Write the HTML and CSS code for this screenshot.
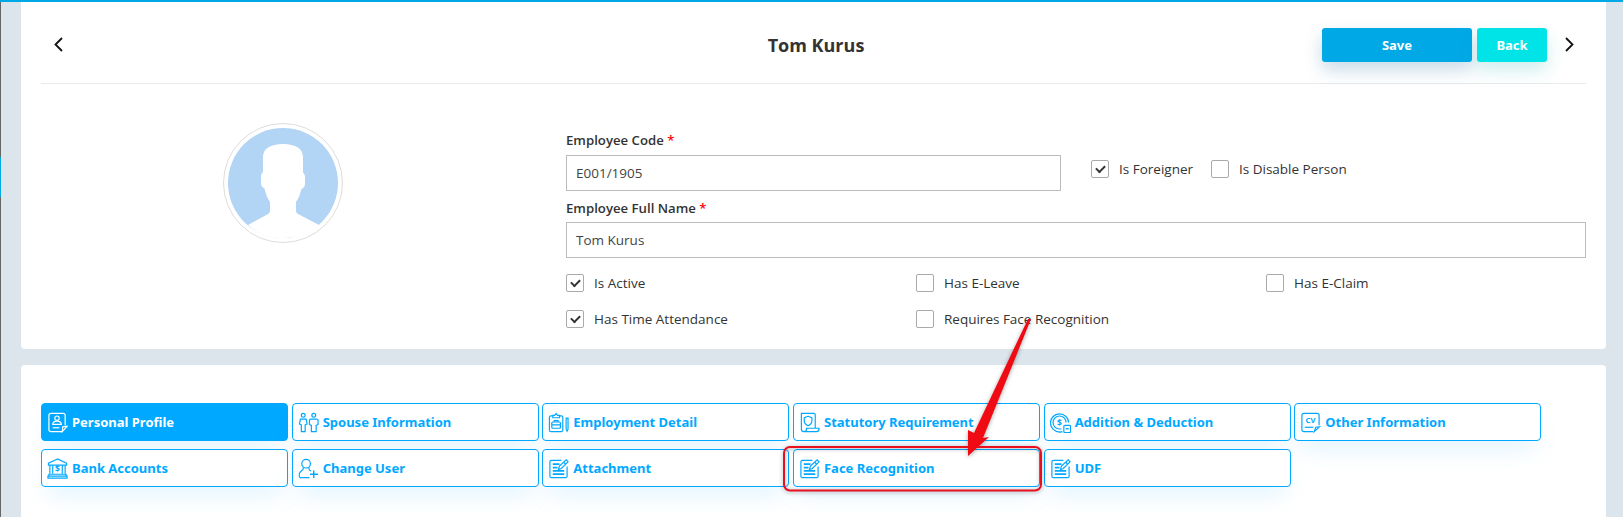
FILE: index.html
```html
<!DOCTYPE html>
<html lang="en">
<head>
    <meta charset="UTF-8">
    <meta name="viewport" content="width=device-width, initial-scale=1.0">
    <title>Tom Kurus</title>
    <link rel="stylesheet" href="styles.css">
</head>
<body>
    <!-- Shared note icon, used by three tabs -->
    <svg class="sprite" aria-hidden="true">
        <symbol id="icon-note" viewBox="0 0 22 22">
            <path d="M14 2.500H3.500a1.500 1.500 0 0 0-1.500 1.500v15a1.500 1.500 0 0 0 1.500 1.500h15a1.500 1.500 0 0 0 1.500-1.500V9"/>
            <path d="M5 6.500h7M5 10h5M5 13.500h12M5 17h12" stroke-width="1.800"/>
            <path d="M11 12l1-3.500 7-6.500 2 2-7 7z" fill="#fff"/>
            <path d="M16.500 4.500l2 2"/>
        </symbol>
    </svg>

    <div class="topbar"></div>
    <div class="layout">
        <div class="rail"><div class="rail-active"></div></div>
        <main class="content">
            <section class="card card-employee">
                <header class="card-header">
                    <svg class="chevron" viewBox="0 0 9 15"><path d="M8 1L1.500 7.500 8 14"/></svg>
                    <h1>Tom Kurus</h1>
                    <div class="actions">
                        <button class="btn btn-save">Save</button>
                        <button class="btn btn-back">Back</button>
                        <svg class="chevron chevron-right" viewBox="0 0 9 15"><path d="M1 1l6.500 6.500L1 14"/></svg>
                    </div>
                </header>
                <div class="employee">
                    <div class="avatar-col">
                        <div class="avatar">
                            <svg viewBox="0 0 110 110">
                                <circle cx="55" cy="55" r="55" fill="#b2d4f5"/>
                                <path d="M20 97L40 86c1.500-.8 2-2 2-3.500V74c-2-3-3.500-6-4.500-9.500l-1-4c-2-1-3.500-2.500-3.500-5v-7c0-2 .8-3.500 2-4.500V29c0-8 7-13 20-13s20 5 20 13v15.500c1.200 1 2 2.500 2 4.500v7c0 2.500-1.500 4-3.500 5l-1 3.500c-1 3.500-2.500 6.500-4.500 9.500v8.500c0 1.500.5 2.700 2 3.500L91 97C81 106 69 110 55 110S30 106 20 97z" fill="#fff"/>
                            </svg>
                        </div>
                    </div>
                    <div class="employee-form">
                        <label class="field-label">Employee Code <span class="required">*</span></label>
                        <div class="code-row">
                            <input class="text-input code-input" type="text" value="E001/1905">
                            <div class="code-checks">
                                <div class="check is-checked"><span class="box"></span>Is Foreigner</div>
                                <div class="check"><span class="box"></span>Is Disable Person</div>
                            </div>
                        </div>
                        <label class="field-label field-label-next">Employee Full Name <span class="required">*</span></label>
                        <input class="text-input" type="text" value="Tom Kurus">
                        <div class="check-grid">
                            <div class="check is-checked"><span class="box"></span>Is Active</div>
                            <div class="check"><span class="box"></span>Has E-Leave</div>
                            <div class="check"><span class="box"></span>Has E-Claim</div>
                            <div class="check is-checked"><span class="box"></span>Has Time Attendance</div>
                            <div class="check"><span class="box"></span>Requires Face Recognition</div>
                        </div>
                    </div>
                </div>
            </section>

            <section class="card card-tabs">
                <div class="tabs">
                    <a class="tab is-active">
                        <svg viewBox="0 0 22 22"><path d="M16 20.500H4a2 2 0 0 1-2-2V3.500a2 2 0 0 1 2-2h13a2 2 0 0 1 2 2V14"/><circle cx="10.500" cy="6.500" r="2.300"/><path d="M6 13c0-2.500 2-3.500 4.500-3.500S15 10.500 15 13z"/><path d="M6 16.500h7"/><path d="M16 20.500l5-5.500-4.500.5z"/></svg>
                        Personal Profile
                    </a>
                    <a class="tab">
                        <svg viewBox="0 0 22 22"><circle cx="5.500" cy="3.500" r="2"/><circle cx="16.500" cy="3.500" r="2"/><path d="M2.500 7.500h6l1 5-2 1V20.500h-4V13.500l-2-1z"/><path d="M13.500 7.500h6c1 0 1.500 .5 1.500 1.500v4l-2 1v6.500h-5V14l-2-1V9c0-1 .5-1.500 1.500-1.500z"/></svg>
                        Spouse Information
                    </a>
                    <a class="tab">
                        <svg viewBox="0 0 22 22"><path d="M5 4H3a1.500 1.500 0 0 0-1.500 1.500V19A1.500 1.500 0 0 0 3 20.500h11a1.500 1.500 0 0 0 1.500-1.500V5.500A1.500 1.500 0 0 0 14 4h-2"/><path d="M5 6V3.500h2l1.500-2 1.500 2h2V6z"/><rect x="4" y="10.500" width="9" height="6.500" rx="1"/><path d="M6.500 10.500V9h4v1.500M4 13.500h9"/><path d="M19 6.500h2V18l-1 2-1-2z"/></svg>
                        Employment Detail
                    </a>
                    <a class="tab">
                        <svg viewBox="0 0 22 22"><path d="M17 17V3a1.500 1.500 0 0 0-1.500-1.500H2.500V18a2.500 2.500 0 0 0 2.500 2.500h13.500c1.500 0 2.500-1.500 2.500-3.500H8c0 2-1 3.500-3 3.500"/><path d="M9.500 4.500l4 1.500v3.500c0 2.500-2 4-4 5-2-1-4-2.500-4-5V6z"/></svg>
                        Statutory Requirement
                    </a>
                    <a class="tab">
                        <svg viewBox="0 0 22 22"><path d="M13 20.500c-1 .3-2 .5-3 .5A9.500 9.500 0 1 1 19.500 11"/><path d="M12 17.500c-.7 .2-1.300 .3-2 .3a6.800 6.800 0 1 1 6.800-6.800"/><text class="coin" x="10" y="14.500">$</text><rect x="14.500" y="14" width="7" height="7.500" rx="1" fill="#fff"/><path d="M16.500 17.500h3" stroke-width="1.500"/></svg>
                        Addition &amp; Deduction
                    </a>
                    <a class="tab">
                        <svg viewBox="0 0 22 22"><path d="M14 20.500H4a2 2 0 0 1-2-2V3.500a2 2 0 0 1 2-2h14a2 2 0 0 1 2 2V14"/><text class="cv" x="11" y="11.500">CV</text><path d="M5 16h9"/><path d="M15 20.500l5.500-5-4 .5z"/></svg>
                        Other Information
                    </a>
                    <a class="tab">
                        <svg viewBox="0 0 22 22"><path d="M11 1L1.500 5.500V7.500h19V5.500z"/><path d="M3 7.500v9M6 7.500v9M16 7.500v9M19 7.500v9"/><text class="coin" x="11" y="15">$</text><path d="M2 17h18v2H2zM1 19h20v2H1z"/></svg>
                        Bank Accounts
                    </a>
                    <a class="tab">
                        <svg viewBox="0 0 22 22"><circle cx="8.500" cy="6" r="4.500"/><path d="M5.500 10v1.500c0 1-3.500 2.500-4 4.500-.4 1.800-.4 3.500 .5 4.500h10M11.500 10v1.500c0 1 1 1.500 2 2"/><path d="M16.500 13v8M12.500 17h8.500" stroke-width="1.500"/></svg>
                        Change User
                    </a>
                    <a class="tab"><svg viewBox="0 0 22 22"><use href="#icon-note"/></svg>Attachment</a>
                    <a class="tab"><svg viewBox="0 0 22 22"><use href="#icon-note"/></svg>Face Recognition</a>
                    <a class="tab"><svg viewBox="0 0 22 22"><use href="#icon-note"/></svg>UDF</a>
                </div>
            </section>
        </main>
    </div>

    <!-- Red markup drawn on top of the screenshot -->
    <svg class="annotation" viewBox="0 0 1623 517">
        <rect x="784" y="447" width="257" height="43.500" rx="6" fill="none" stroke="#e8101e" stroke-width="2"/>
        <polygon points="1031,319 1028,319 974,433 968,430 968,456 989,437 983,438" fill="#f00a14"/>
    </svg>
</body>
</html>
```

FILE: styles.css
```css
* {
    box-sizing: border-box;
}
body {
    font-family: "Open Sans", sans-serif;
    font-size: 13.5px;
    color: #333;
    margin: 0;
    height: 517px;
    overflow: hidden;
    position: relative;
    background-color: #dce5ec;
}
.sprite {
    display: none;
}
.topbar {
    height: 2px;
    background-color: #00a8e6;
}
.layout {
    display: flex;
}
.rail {
    width: 1px;
    height: 515px;
    padding-top: 155px;
    background-color: #666;
}
.rail-active {
    height: 40px;
    background-color: #00a8e6;
}
.content {
    margin-left: 20px;
    width: 1585px;
}
.card {
    background: #fff;
    padding: 0 20px;
}
.card-employee {
    height: 347px;
    border-radius: 0 0 4px 4px;
}
.card-tabs {
    margin-top: 16px;
    height: 160px;
    padding-top: 38px;
    border-radius: 4px 4px 0 0;
}
.card-header {
    display: grid;
    grid-template-columns: 1fr auto 1fr;
    align-items: center;
    height: 82px;
    padding: 4px 8px 0 13px;
    border-bottom: 1px solid #e8eaec;
}
.card-header h1 {
    margin: 0;
    font-size: 18px;
    font-weight: 700;
    color: #333;
}
.chevron {
    width: 9px;
    height: 15px;
    fill: none;
    stroke: #111;
    stroke-width: 1.8;
}
.chevron-right {
    margin-right: 4px;
}
.actions {
    display: flex;
    align-items: center;
    justify-self: end;
}
.btn {
    height: 34px;
    border: none;
    border-radius: 3px;
    color: #fff;
    font-family: "Noto Sans", sans-serif;
    font-size: 13px;
    font-weight: 700;
}
.btn-save {
    width: 150px;
    margin-right: 5px;
    background-color: #00a8e6;
    box-shadow: 0 8px 18px rgba(0, 90, 150, 0.22);
}
.btn-back {
    width: 70px;
    margin-right: 18px;
    background-color: #00e4e8;
    box-shadow: 0 8px 18px rgba(0, 170, 170, 0.2);
}
.employee {
    display: flex;
}
.avatar-col {
    flex: none;
    width: 483px;
    margin-right: 42px;
    padding-top: 39px;
    display: flex;
    justify-content: center;
}
.avatar {
    width: 120px;
    height: 120px;
    padding: 4px;
    border: 1px solid #ddd;
    border-radius: 50%;
}
.avatar svg {
    display: block;
    width: 110px;
    height: 110px;
}
.employee-form {
    flex: 1;
    min-width: 0;
    padding-top: 47px;
}
.field-label {
    display: block;
    font-size: 13.2px;
    font-weight: 600;
    line-height: 18px;
    margin-bottom: 6px;
}
.field-label-next {
    margin-top: 8px;
    margin-bottom: 5px;
}
.required {
    color: #f00;
}
.text-input {
    display: block;
    width: 100%;
    height: 36px;
    padding: 0 9px;
    border: 1px solid #bbb;
    font-family: "Open Sans", sans-serif;
    font-size: 13.5px;
    color: #444;
}
.code-row {
    display: flex;
    align-items: flex-start;
}
.code-input {
    width: 495px;
    margin-right: 30px;
}
.code-checks {
    display: flex;
    gap: 18px;
    padding-top: 5px;
}
.check-grid {
    display: grid;
    grid-template-columns: 350px 350px 1fr;
    row-gap: 18px;
    margin-top: 16px;
}
.check {
    display: flex;
    align-items: center;
    gap: 10px;
    height: 18px;
}
.box {
    width: 18px;
    height: 18px;
    border: 1px solid #aaa;
    border-radius: 2px;
    position: relative;
}
.is-checked .box::after {
    content: "";
    position: absolute;
    left: 4px;
    top: 4px;
    width: 7px;
    height: 4px;
    border-left: 2px solid #333;
    border-bottom: 2px solid #333;
    transform: rotate(-45deg);
}
.tabs {
    display: grid;
    grid-template-columns: repeat(6, 247px);
    column-gap: 3.66px;
    row-gap: 8px;
}
.tab {
    display: flex;
    align-items: center;
    gap: 4px;
    height: 38px;
    padding-left: 5px;
    border: 1px solid #00a8ff;
    border-radius: 4px;
    background: #fff;
    color: #00a8ff;
    font-family: "Noto Sans", sans-serif;
    font-size: 13px;
    font-weight: 700;
    box-shadow: 0 14px 24px -6px rgba(0, 168, 255, 0.12);
}
.tab svg {
    flex: none;
    width: 21px;
    height: 21px;
    fill: none;
    stroke: currentColor;
    stroke-width: 1.25;
}
.is-active {
    background-color: #00a8ff;
    color: #fff;
}
.coin,
.cv {
    fill: currentColor;
    stroke: none;
    font-family: "Noto Sans", sans-serif;
    font-weight: 700;
    text-anchor: middle;
}
.coin {
    font-size: 9px;
}
.cv {
    font-size: 8px;
}
.annotation {
    position: absolute;
    left: 0;
    top: 0;
    width: 1623px;
    height: 517px;
    pointer-events: none;
    filter: drop-shadow(0 1px 2px rgba(0, 0, 0, 0.35));
}
```
